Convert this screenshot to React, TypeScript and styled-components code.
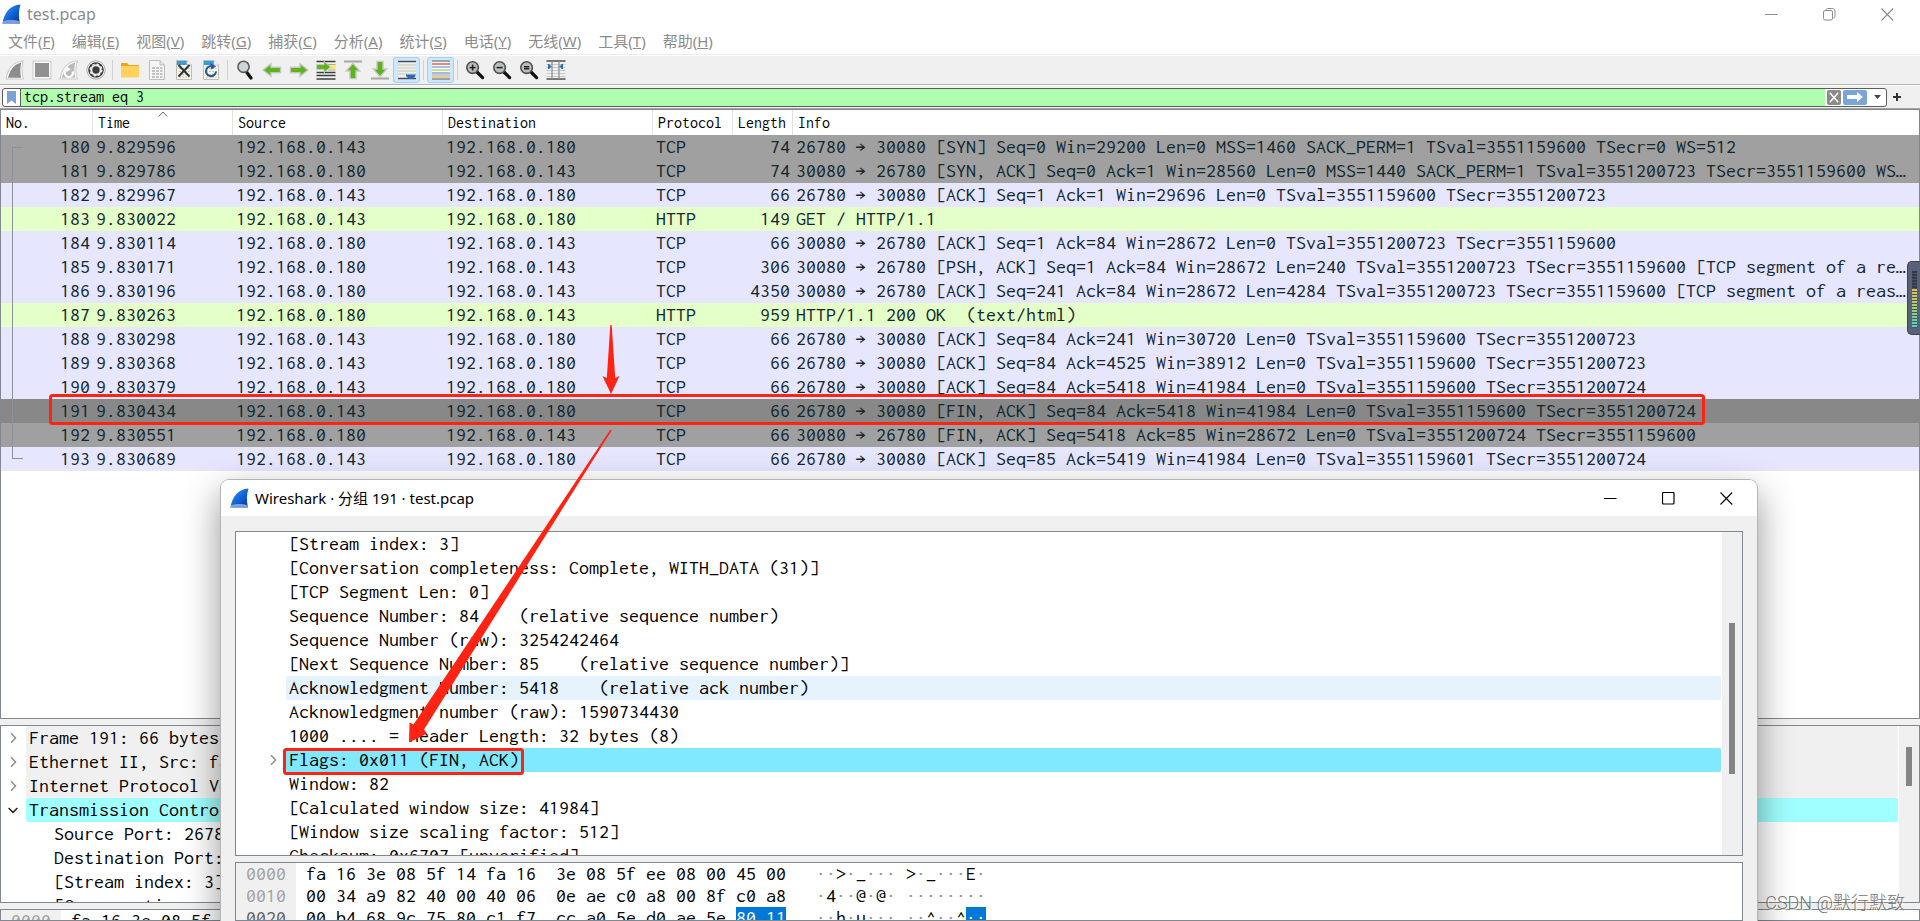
import React from 'react';
import styled, { createGlobalStyle, css } from 'styled-components';

const mono = `Inconsolata, 'Liberation Mono', 'Noto Sans CJK SC', monospace`;
const ui = `'Noto Sans', 'Noto Sans CJK SC', sans-serif`;
const frameLine = '#828790';
const red = '#ff2313';

const Global = createGlobalStyle`
  * { box-sizing: border-box; }
  html, body { margin: 0; padding: 0; }
  body { font-family: ${ui}; background: #f0f0f0; overflow: hidden; }
  button { border: 0; padding: 0; margin: 0; background: none; font: inherit; color: inherit; }
  svg { display: block; }
`;

/* ---------- main window ---------- */

const Desktop = styled.div`
  position: relative;
  display: flex;
  flex-direction: column;
  height: 100vh;
  overflow: hidden;
  background: #f0f0f0;
`;

const TitleBar = styled.header<{ $dialog?: boolean }>`
  display: flex;
  align-items: center;
  flex: none;
  height: ${p => (p.$dialog ? 36 : 28)}px;
  padding-left: ${p => (p.$dialog ? 9 : 2)}px;
  gap: 6px;
  background: #fff;
  color: ${p => (p.$dialog ? '#000' : '#8c8c8c')};
  font-size: 16px;
  line-height: 24px;
`;

const TitleText = styled.span<{ $small?: boolean }>`
  font-size: ${p => (p.$small ? 15 : 16)}px;
`;

const WindowButtons = styled.div<{ $dialog?: boolean }>`
  display: flex;
  align-self: stretch;
  margin-left: auto;
  padding-right: ${p => (p.$dialog ? 2 : 4)}px;
  color: ${p => (p.$dialog ? '#000' : '#8c8c8c')};
`;

const WindowButton = styled.button`
  display: flex;
  align-items: center;
  justify-content: center;
  width: 58px;
`;

const MenuBar = styled.nav`
  display: flex;
  gap: 1px;
  flex: none;
  height: 26px;
  background: #fff;
`;

const MenuItem = styled.button`
  padding: 0 8px;
  color: #8c8c8c;
  font-size: 15px;
  line-height: 26px;
  white-space: nowrap;
`;

const ToolBar = styled.div`
  display: flex;
  align-items: center;
  flex: none;
  height: 31px;
  padding-left: 1px;
  border-top: 1px solid #ececec;
  border-bottom: 1px solid #b4b4b6;
  background: #f0f0f0;
  box-shadow: inset 0 1px 0 #fff;
`;

const ToolButton = styled.button<{ $on?: boolean }>`
  display: flex;
  align-items: center;
  justify-content: center;
  width: 27px;
  height: 26px;
  ${p =>
    p.$on &&
    css`
      border: 1px solid #99d1ff;
      border-radius: 3px;
      background: #cce8ff;
    `}
`;

const ToolSeparator = styled.span`
  width: 1px;
  height: 20px;
  margin: 0 3px;
  background: #d0d0d0;
`;

const FilterBar = styled.div`
  display: flex;
  align-items: center;
  flex: none;
  height: 24px;
  padding-left: 2px;
  border-top: 1px solid #fff;
  border-bottom: 1px solid #a4a4a8;
`;

const FilterBox = styled.div`
  display: flex;
  flex: 1;
  align-items: center;
  height: 19px;
  border: 1px solid #5c5c5c;
  border-radius: 3px;
  overflow: hidden;
  background: #fff;
`;

const BookmarkButton = styled.button`
  display: flex;
  align-items: center;
  justify-content: center;
  width: 18px;
  height: 17px;
  border-right: 1px solid #5c5c5c;
`;

const FilterInput = styled.input`
  flex: 1;
  min-width: 0;
  height: 17px;
  padding: 0 3px 1px;
  border: 0;
  outline: 0;
  background: #afffaf;
  color: #000;
  font: 16px ${mono};
`;

const FilterAction = styled.button<{ $w: number; $bg?: string }>`
  display: flex;
  align-items: center;
  justify-content: center;
  width: ${p => p.$w}px;
  height: 15px;
  margin-left: 2px;
  border-radius: 2px;
  background: ${p => p.$bg || 'transparent'};
`;

const AddFilter = styled.button`
  display: flex;
  align-items: center;
  width: 33px;
  height: 19px;
  padding-left: 6px;
`;

const Pane = styled.section<{ $h?: number }>`
  display: flex;
  flex: ${p => (p.$h ? `0 0 ${p.$h}px` : '1 1 0')};
  min-height: 0;
  overflow: hidden;
  border: 1px solid ${frameLine};
  background: #fff;
`;

const Splitter = styled.div`
  flex: none;
  height: 6px;
  background: #f0f0f0;
`;

/* ---------- packet list ---------- */

const PacketTable = styled.table`
  width: 100%;
  height: max-content;
  table-layout: fixed;
  border-collapse: collapse;
  font-family: ${mono};
`;

const HeadCell = styled.th<{ $w?: number }>`
  position: relative;
  width: ${p => (p.$w ? `${p.$w}px` : 'auto')};
  height: 25px;
  padding: 0 0 0 5px;
  color: #000;
  font-size: 16px;
  font-weight: 400;
  line-height: 25px;
  text-align: left;
  box-shadow: ${p => (p.$w ? 'inset -1px 0 0 #e2e2e2' : 'none')};
`;

const SortMark = styled.svg`
  position: absolute;
  top: 1px;
  left: calc(50% - 5px);
`;

type Tone = 'gray' | 'tcp' | 'http' | 'selected';
const tones: Record<Tone, string> = {
  gray: '#a0a0a0',
  tcp: '#e7e6ff',
  http: '#e4ffc7',
  selected: '#888888',
};

const PacketRow = styled.tr<{ $tone: Tone }>`
  height: 24px;
  background: ${p => tones[p.$tone]};
  color: #12272e;
`;

const Cell = styled.td<{ $right?: boolean }>`
  position: relative;
  padding: ${p => (p.$right ? '0 3px 0 0' : '0 0 0 3px')};
  overflow: hidden;
  font-size: 20px;
  line-height: 24px;
  text-align: ${p => (p.$right ? 'right' : 'left')};
  text-overflow: ellipsis;
  white-space: pre;
`;

const StreamLine = styled.i<{ $edge?: 'start' | 'end' }>`
  position: absolute;
  left: 11px;
  width: 11px;
  top: ${p => (p.$edge === 'start' ? 12 : 0)}px;
  bottom: ${p => (p.$edge === 'end' ? 12 : 0)}px;
  border-left: 1px solid #8b9299;
  ${p => p.$edge === 'start' && 'border-top: 1px solid #8b9299;'}
  ${p => p.$edge === 'end' && 'border-bottom: 1px solid #8b9299;'}
`;

/* ---------- detail tree ---------- */

const Tree = styled.ul`
  flex: 1;
  min-width: 0;
  margin: 0;
  padding: 0;
  list-style: none;
  overflow: hidden;
  color: #000;
  font: 20px/24px ${mono};
`;

const TreeRow = styled.li`
  display: flex;
  height: 24px;
  padding-right: 1px;
`;

const TreeToggle = styled.span<{ $w: number }>`
  display: flex;
  align-items: center;
  justify-content: flex-end;
  flex: none;
  width: ${p => p.$w}px;
  padding-right: 8px;
`;

const TreeLabel = styled.span<{ $bg?: string }>`
  flex: 1;
  min-width: 0;
  padding-left: 3px;
  overflow: hidden;
  border-radius: 2px;
  background: ${p => p.$bg || 'transparent'};
  white-space: pre;
`;

const ScrollTrack = styled.div<{ $top: number }>`
  flex: none;
  width: 20px;
  padding: ${p => p.$top}px 0 0 7px;
  background: #f0f0f0;
`;

const ScrollThumb = styled.div<{ $h: number }>`
  width: 6px;
  height: ${p => p.$h}px;
  background: #858585;
`;

/* ---------- hex view ---------- */

const HexView = styled.div`
  flex: 1;
  overflow: hidden;
  font: 20px/22px ${mono};
  color: #000;
`;

const HexRow = styled.div`
  display: flex;
  height: 22px;
  white-space: pre;
`;

const HexOffset = styled.span<{ $strong?: boolean }>`
  width: 60px;
  padding-left: 10px;
  background: #f0f0f0;
  color: ${p => (p.$strong ? '#5e5e5e' : '#a0a0a0')};
`;

const HexBytes = styled.span`
  padding-left: 10px;
`;

const HexAscii = styled.span`
  padding-left: 30px;
`;

const Faint = styled.span`
  color: #909090;
`;

const Marked = styled.mark`
  display: inline-block;
  background: #0078d7;
  color: #fff;
`;

/* ---------- packet dialog ---------- */

const Dialog = styled.div`
  position: absolute;
  top: 479px;
  right: 162px;
  bottom: 0;
  left: 220px;
  display: flex;
  flex-direction: column;
  overflow: hidden;
  border: 1px solid #b4b4b4;
  border-bottom: 0;
  border-radius: 9px 9px 0 0;
  background: #f0f0f0;
`;

const DialogShadow = styled.div`
  position: absolute;
  top: 479px;
  right: 162px;
  bottom: -40px;
  left: 220px;
  border-radius: 9px;
  box-shadow: 0 14px 36px rgba(0, 0, 0, 0.42);
`;

const DialogBody = styled.div`
  display: flex;
  flex: 1;
  flex-direction: column;
  min-height: 0;
  padding: 15px 14px 0;
`;

/* ---------- things over the windows ---------- */

const Annotations = styled.svg`
  position: absolute;
  inset: 0;
  pointer-events: none;
`;

const Meter = styled.div`
  position: absolute;
  top: 261px;
  right: 0;
  width: 13px;
  height: 74px;
  padding: 9px 3px 8px 4px;
  border: 1px solid #3c4158;
  border-right: 0;
  border-radius: 5px 0 0 5px;
  background: #5a607a;
`;

const MeterBars = styled.div`
  width: 5px;
  height: 57px;
  background:
    repeating-linear-gradient(to bottom, transparent 0 2px, #4a5068 2px 3px),
    linear-gradient(to bottom, #34384c 0 17px, #e2c04a 18px, #a8cf68 34px, #56d6b0 54px);
`;

const Watermark = styled.div`
  position: absolute;
  right: 15px;
  bottom: 5px;
  color: rgba(90, 90, 90, 0.85);
  font: 300 18px/26px Roboto, 'Noto Sans CJK SC', sans-serif;
  text-shadow: 1px 1px 0 rgba(255, 255, 255, 0.7);
`;

/* ---------- drawings ---------- */

const Fin = ({ id }: { id: string }) => (
  <svg width="19" height="20" viewBox="0 0 19 20" aria-hidden="true">
    <defs>
      <linearGradient id={id} x1="0" y1="0" x2="1" y2="1">
        <stop offset="0" stopColor="#3f9bf5" />
        <stop offset="0.5" stopColor="#1166d8" />
        <stop offset="1" stopColor="#06329a" />
      </linearGradient>
    </defs>
    <path d="M0.5 19.5C2 9 8 1 18.5 0.5C16.5 6 16.5 13 18 19.5Z" fill={`url(#${id})`} />
    <path d="M0.5 19.5L1 17C6 15.5 13 15.5 17.6 17L18 19.5Z" fill="#7f9fd8" />
  </svg>
);

const WinIcon = ({ kind }: { kind: 'min' | 'max' | 'restore' | 'close' }) => (
  <svg width="13" height="13" viewBox="0 0 13 13" fill="none" stroke="currentColor" aria-hidden="true">
    {kind === 'min' && <path d="M0 6.5H12.5" />}
    {kind === 'max' && <rect x="0.5" y="0.5" width="11.5" height="11.5" rx="1" strokeWidth="1.2" />}
    {kind === 'restore' && (
      <>
        <rect x="0.5" y="2.5" width="9" height="9.5" rx="1.5" />
        <path d="M3 2.2C3 1 3.6 0.5 4.6 0.5H9.5C11 0.5 12 1.4 12 3V8.4C12 9.4 11.4 10 10.2 10" />
      </>
    )}
    {kind === 'close' && <path d="M0.5 0.5L12.2 12.5M12.2 0.5L0.5 12.5" strokeWidth="1.1" />}
  </svg>
);

const Lens = ({ sign }: { sign: 'plus' | 'minus' | 'equal' }) => (
  <>
    <path d="M12 12L17.6 17.6" stroke="#111" strokeWidth="3.2" strokeLinecap="round" />
    <circle cx="7.6" cy="7.6" r="5.8" fill="#b9bdbd" stroke="#4c4f50" strokeWidth="1.6" />
    {sign !== 'equal' && <path d="M4.6 7.6H10.6" stroke="#222" strokeWidth="1.5" />}
    {sign === 'plus' && <path d="M7.6 4.6V10.6" stroke="#222" strokeWidth="1.5" />}
    {sign === 'equal' && <path d="M5 6.8H10.2M5 8.8H10.2" stroke="#222" strokeWidth="1.4" />}
  </>
);

const Sheet = ({ top }: { top: string }) => (
  <>
    <path d="M2.5 0.5H13L17.5 5V19.5H2.5Z" fill="#f6f5e8" stroke="#bdbdb2" />
    <path d="M3 1H13V5H3Z" fill={top} />
    <path d="M13 0.5V5H17.5" fill="#fff" stroke="#bdbdb2" />
    <path d="M5 8.5H15.5M5 11.5H15.5M5 14.5H15.5M5 17H15.5" stroke="#c4c4bb" strokeDasharray="2 1" />
  </>
);

const glyphs: Record<string, React.ReactNode> = {
  start: (
    <>
      <path d="M1 19C2.5 9 8 1.5 18.5 0.8C16.5 6 16.5 13 18.5 19Z" fill="#fafafa" stroke="#c9c9c9" />
      <path d="M3 17.8C5 10 9 4.5 16.2 2.6C15 8 15 13 16.2 17.8Z" fill="#8d8d8d" />
    </>
  ),
  stop: (
    <>
      <rect x="1" y="1" width="18" height="18" fill="#fafafa" stroke="#c9c9c9" />
      <rect x="3" y="3" width="14" height="14" fill="#919191" />
    </>
  ),
  restart: (
    <>
      <path d="M1 19C2.5 9 8 1.5 18.5 0.8C16.5 6 16.5 13 18.5 19Z" fill="#fafafa" stroke="#c9c9c9" />
      <path d="M3 17.8C5 10 9 4.5 16.2 2.6C15 8 15 13 16.2 17.8Z" fill="#b9b9b9" />
      <path d="M8 9.5A4 4 0 1 0 13.5 11.5" fill="none" stroke="#fff" strokeWidth="2.2" />
      <path d="M7.5 6.5L12 9.2L7.6 12Z" fill="#fff" />
    </>
  ),
  options: (
    <>
      <circle cx="10" cy="10" r="9.2" fill="#fff" stroke="#a8a8a8" />
      <circle cx="10" cy="10" r="7.8" fill="#3c3c3c" />
      <circle cx="10" cy="10" r="4.7" fill="none" stroke="#efefef" strokeWidth="2" />
      <circle cx="10" cy="10" r="5.8" fill="none" stroke="#efefef" strokeWidth="1.4" strokeDasharray="2.3 2.25" />
      <circle cx="10" cy="10" r="2.6" fill="#3c3c3c" />
    </>
  ),
  open: (
    <>
      <path d="M1 4.2C1 3.5 1.4 3 2 3H7L9 5H18C18.6 5 19 5.4 19 6V8H1Z" fill="#eba817" />
      <rect x="1" y="6" width="18" height="11.5" rx="1" fill="#ffd25e" />
    </>
  ),
  save: (
    <>
      <path d="M2.5 0.5H13L17.5 5V19.5H2.5Z" fill="#f5f5f5" stroke="#bdbdbd" />
      <path d="M13 0.5V5H17.5" fill="#e0e0e0" stroke="#bdbdbd" />
      <path d="M5 8H15.5M5 11H15.5M5 14H15.5M5 17H15.5" stroke="#c4c4c4" strokeWidth="2" strokeDasharray="3 1" />
    </>
  ),
  close: (
    <>
      <Sheet top="#3b9ad8" />
      <path d="M4.5 5L15.5 16.5M15.5 5L4.5 16.5" stroke="#2f3338" strokeWidth="2" />
    </>
  ),
  reload: (
    <>
      <Sheet top="#3b9ad8" />
      <path d="M12.5 6.8A5 5 0 1 0 15 11.5" fill="none" stroke="#27579c" strokeWidth="2" />
      <path d="M9.5 3L15.2 6.4L10 9.6Z" fill="#27579c" />
    </>
  ),
  find: (
    <>
      <path d="M11.5 12L16 18" stroke="#111" strokeWidth="3.2" strokeLinecap="round" />
      <circle cx="8.5" cy="6.8" r="5.6" fill="#cfd4d6" stroke="#5a5d5f" strokeWidth="1.6" />
    </>
  ),
  back: <path d="M1 10L9 3.6V7.3H18.6V12.7H9V16.4Z" fill="#5db31f" stroke="#c6c9c0" strokeWidth="1.4" />,
  forward: <path d="M19 10L11 3.6V7.3H1.4V12.7H11V16.4Z" fill="#5db31f" stroke="#c6c9c0" strokeWidth="1.4" />,
  goto: (
    <>
      <path d="M0.5 1.5H19.5M0.5 12.5H19.5M0.5 15.5H19.5M0.5 19H19.5" stroke="#3c3f40" strokeWidth="1.4" />
      <path d="M12 4.5H19.5M12 10H19.5" stroke="#aaa" />
      <rect x="12" y="5.4" width="7.5" height="3.6" fill="#fce94f" />
      <path d="M14.5 7L8 1.4V4.6H0.7V9.4H8V12.6Z" fill="#5db31f" stroke="#c6c9c0" />
    </>
  ),
  top: (
    <>
      <path d="M1 1.5H19" stroke="#a7a9a5" strokeWidth="2" />
      <path d="M10 3.4L16.8 11H13V18.6H7V11H3.2Z" fill="#5db31f" stroke="#c6c9c0" strokeWidth="1.4" />
    </>
  ),
  bottom: (
    <>
      <path d="M1 18.5H19" stroke="#a7a9a5" strokeWidth="2" />
      <path d="M10 16.6L16.8 9H13V1.4H7V9H3.2Z" fill="#5db31f" stroke="#c6c9c0" strokeWidth="1.4" />
    </>
  ),
  follow: (
    <>
      <rect x="1" y="1" width="18" height="18" fill="#eeeeea" />
      <path d="M1 1.5H19M1 18.5H19" stroke="#4b4e50" strokeWidth="1.4" />
      <path d="M1 5H19M1 8H19M1 11H19M1 14H19" stroke="#c6c6bf" />
      <path d="M9 14.5H18.5V16L15.5 19H12L9 16Z" fill="#2f66b0" />
    </>
  ),
  colorize: (
    <>
      <rect x="1" y="0.5" width="18" height="19" fill="#fff" />
      <path d="M1 1H19M1 19H19" stroke="#4b4e50" strokeWidth="1.2" />
      <path d="M1 4H19" stroke="#ef4949" strokeWidth="1.4" />
      <path d="M1 7H19" stroke="#6f94cc" strokeWidth="1.2" />
      <path d="M1 10H19" stroke="#8ad84a" strokeWidth="1.2" />
      <path d="M1 13H19" stroke="#6f8fc0" strokeWidth="1.2" />
      <path d="M1 15H19" stroke="#a08ab5" strokeWidth="1" />
      <path d="M1 17H19" stroke="#d0b040" strokeWidth="1.2" />
    </>
  ),
  zoomIn: <Lens sign="plus" />,
  zoomOut: <Lens sign="minus" />,
  zoomNormal: <Lens sign="equal" />,
  columns: (
    <>
      <path d="M0.5 1H19.5M0.5 19H19.5" stroke="#4b4e50" strokeWidth="1.4" />
      <path d="M0.5 4.5H19.5M0.5 7.5H19.5M0.5 10.5H19.5M0.5 13.5H19.5M0.5 16.5H19.5" stroke="#c9c9c2" />
      <path d="M6 1V19M13 1V19" stroke="#8b8d8b" strokeWidth="1.2" />
      <path d="M2.5 4V9L5 6.5ZM16.5 4V9L14 6.5Z" fill="#2f66b0" stroke="#2f66b0" />
    </>
  ),
};

const Chevron = ({ open }: { open?: boolean }) => (
  <svg width="10" height="12" viewBox="0 0 10 12" fill="none" aria-hidden="true">
    {open ? (
      <path d="M0.6 4L5 8.4L9.4 4" stroke="#222" strokeWidth="1.5" />
    ) : (
      <path d="M3 1.2L7.6 6L3 10.8" stroke="#8a8a8a" strokeWidth="1.4" />
    )}
  </svg>
);

/* ---------- data ---------- */

const menus: [string, string][] = [
  ['文件', 'F'], ['编辑', 'E'], ['视图', 'V'], ['跳转', 'G'], ['捕获', 'C'], ['分析', 'A'],
  ['统计', 'S'], ['电话', 'Y'], ['无线', 'W'], ['工具', 'T'], ['帮助', 'H'],
];

const tools = [
  'start', 'stop', 'restart', 'options', '|', 'open', 'save', 'close', 'reload', '|',
  'find', 'back', 'forward', 'goto', 'top', 'bottom', 'follow', '|', 'colorize', '|',
  'zoomIn', 'zoomOut', 'zoomNormal', 'columns',
];

const columns: [string, number | undefined][] = [
  ['No.', 92], ['Time', 140], ['Source', 210], ['Destination', 210], ['Protocol', 80], ['Length', 60], ['Info', undefined],
];

const C = '192.168.0.143';
const S = '192.168.0.180';
const packets: [number, string, string, string, string, number, string, Tone][] = [
  [180, '9.829596', C, S, 'TCP', 74, '26780 → 30080 [SYN] Seq=0 Win=29200 Len=0 MSS=1460 SACK_PERM=1 TSval=3551159600 TSecr=0 WS=512', 'gray'],
  [181, '9.829786', S, C, 'TCP', 74, '30080 → 26780 [SYN, ACK] Seq=0 Ack=1 Win=28560 Len=0 MSS=1440 SACK_PERM=1 TSval=3551200723 TSecr=3551159600 WS…', 'gray'],
  [182, '9.829967', C, S, 'TCP', 66, '26780 → 30080 [ACK] Seq=1 Ack=1 Win=29696 Len=0 TSval=3551159600 TSecr=3551200723', 'tcp'],
  [183, '9.830022', C, S, 'HTTP', 149, 'GET / HTTP/1.1', 'http'],
  [184, '9.830114', S, C, 'TCP', 66, '30080 → 26780 [ACK] Seq=1 Ack=84 Win=28672 Len=0 TSval=3551200723 TSecr=3551159600', 'tcp'],
  [185, '9.830171', S, C, 'TCP', 306, '30080 → 26780 [PSH, ACK] Seq=1 Ack=84 Win=28672 Len=240 TSval=3551200723 TSecr=3551159600 [TCP segment of a re…', 'tcp'],
  [186, '9.830196', S, C, 'TCP', 4350, '30080 → 26780 [ACK] Seq=241 Ack=84 Win=28672 Len=4284 TSval=3551200723 TSecr=3551159600 [TCP segment of a reas…', 'tcp'],
  [187, '9.830263', S, C, 'HTTP', 959, 'HTTP/1.1 200 OK  (text/html)', 'http'],
  [188, '9.830298', C, S, 'TCP', 66, '26780 → 30080 [ACK] Seq=84 Ack=241 Win=30720 Len=0 TSval=3551159600 TSecr=3551200723', 'tcp'],
  [189, '9.830368', C, S, 'TCP', 66, '26780 → 30080 [ACK] Seq=84 Ack=4525 Win=38912 Len=0 TSval=3551159600 TSecr=3551200723', 'tcp'],
  [190, '9.830379', C, S, 'TCP', 66, '26780 → 30080 [ACK] Seq=84 Ack=5418 Win=41984 Len=0 TSval=3551159600 TSecr=3551200724', 'tcp'],
  [191, '9.830434', C, S, 'TCP', 66, '26780 → 30080 [FIN, ACK] Seq=84 Ack=5418 Win=41984 Len=0 TSval=3551159600 TSecr=3551200724', 'selected'],
  [192, '9.830551', S, C, 'TCP', 66, '30080 → 26780 [FIN, ACK] Seq=5418 Ack=85 Win=28672 Len=0 TSval=3551200724 TSecr=3551159600', 'gray'],
  [193, '9.830689', C, S, 'TCP', 66, '26780 → 30080 [ACK] Seq=85 Ack=5419 Win=41984 Len=0 TSval=3551159601 TSecr=3551200724', 'tcp'],
];

type Node = { text: string; toggle?: 'open' | 'closed'; bg?: string; child?: boolean };

const mainTree: Node[] = [
  { text: 'Frame 191: 66 bytes', toggle: 'closed', bg: '#f0f0f0' },
  { text: 'Ethernet II, Src: fa', toggle: 'closed', bg: '#f0f0f0' },
  { text: 'Internet Protocol Ve', toggle: 'closed', bg: '#f0f0f0' },
  { text: 'Transmission Control', toggle: 'open', bg: '#a0ffff' },
  { text: 'Source Port: 26780', child: true },
  { text: 'Destination Port:', child: true },
  { text: '[Stream index: 3]', child: true },
  { text: '[Conversation', child: true },
];

const dialogTree: Node[] = [
  { text: '[Stream index: 3]' },
  { text: '[Conversation completeness: Complete, WITH_DATA (31)]' },
  { text: '[TCP Segment Len: 0]' },
  { text: 'Sequence Number: 84    (relative sequence number)' },
  { text: 'Sequence Number (raw): 3254242464' },
  { text: '[Next Sequence Number: 85    (relative sequence number)]' },
  { text: 'Acknowledgment Number: 5418    (relative ack number)', bg: '#e5f3ff' },
  { text: 'Acknowledgment number (raw): 1590734430' },
  { text: '1000 .... = Header Length: 32 bytes (8)' },
  { text: 'Flags: 0x011 (FIN, ACK)', toggle: 'closed', bg: '#80e8ff' },
  { text: 'Window: 82' },
  { text: '[Calculated window size: 41984]' },
  { text: '[Window size scaling factor: 512]' },
  { text: 'Checksum: 0x6707 [unverified]' },
];

const Ascii = ({ text }: { text: string }) => (
  <>
    {text.split(/(·+)/).map((part, i) => (part.startsWith('·') ? <Faint key={i}>{part}</Faint> : part))}
  </>
);

const TreeList = ({ nodes, indent, childIndent }: { nodes: Node[]; indent: number; childIndent?: number }) => (
  <Tree>
    {nodes.map(n => (
      <TreeRow key={n.text}>
        <TreeToggle $w={n.child && childIndent ? childIndent : indent}>
          {n.toggle && <Chevron open={n.toggle === 'open'} />}
        </TreeToggle>
        <TreeLabel $bg={n.bg}>{n.text}</TreeLabel>
      </TreeRow>
    ))}
  </Tree>
);

export default function App() {
  return (
    <Desktop>
      <Global />
      <TitleBar>
        <Fin id="finMain" />
        <TitleText>test.pcap</TitleText>
        <WindowButtons>
          <WindowButton aria-label="最小化"><WinIcon kind="min" /></WindowButton>
          <WindowButton aria-label="还原"><WinIcon kind="restore" /></WindowButton>
          <WindowButton aria-label="关闭"><WinIcon kind="close" /></WindowButton>
        </WindowButtons>
      </TitleBar>

      <MenuBar>
        {menus.map(([name, key]) => (
          <MenuItem key={key}>{name}(<u>{key}</u>)</MenuItem>
        ))}
      </MenuBar>

      <ToolBar>
        {tools.map((t, i) =>
          t === '|' ? (
            <ToolSeparator key={i} />
          ) : (
            <ToolButton key={i} $on={t === 'follow' || t === 'colorize'} aria-label={t}>
              <svg width="20" height="20" viewBox="0 0 20 20" aria-hidden="true">{glyphs[t]}</svg>
            </ToolButton>
          ),
        )}
      </ToolBar>

      <FilterBar>
        <FilterBox>
          <BookmarkButton aria-label="bookmark">
            <svg width="9" height="13" viewBox="0 0 9 13" aria-hidden="true">
              <path d="M0 0H9V13L4.5 9.5L0 13Z" fill="#7aa2d6" />
            </svg>
          </BookmarkButton>
          <FilterInput aria-label="display filter" defaultValue="tcp.stream eq 3" spellCheck={false} />
          <FilterAction $w={14} $bg="#8a8a86" aria-label="clear">
            <svg width="10" height="11" viewBox="0 0 10 11" aria-hidden="true">
              <path d="M0.8 0.8L9.2 10.2M9.2 0.8L0.8 10.2" stroke="#fff" strokeWidth="1.5" />
            </svg>
          </FilterAction>
          <FilterAction $w={24} $bg="#7ba4d8" aria-label="apply">
            <svg width="16" height="10" viewBox="0 0 16 10" aria-hidden="true">
              <path d="M0 3H10V0L16 5L10 10V7H0Z" fill="#fff" />
            </svg>
          </FilterAction>
          <FilterAction $w={17} aria-label="history">
            <svg width="7" height="4" viewBox="0 0 7 4" aria-hidden="true">
              <path d="M0 0H7L3.5 4Z" fill="#444" />
            </svg>
          </FilterAction>
        </FilterBox>
        <AddFilter aria-label="add">
          <svg width="8" height="8" viewBox="0 0 8 8" aria-hidden="true">
            <path d="M0 4H8M4 0V8" stroke="#333" strokeWidth="2" />
          </svg>
        </AddFilter>
      </FilterBar>

      <Pane>
        <PacketTable>
          <thead>
            <tr>
              {columns.map(([name, w]) => (
                <HeadCell key={name} $w={w}>
                  {name}
                  {name === 'Time' && (
                    <SortMark width="10" height="6" viewBox="0 0 10 6">
                      <path d="M0.8 5.4L5 1L9.2 5.4" fill="none" stroke="#666" />
                    </SortMark>
                  )}
                </HeadCell>
              ))}
            </tr>
          </thead>
          <tbody>
            {packets.map(([no, time, src, dst, proto, len, info, tone], i) => (
              <PacketRow key={no} $tone={tone}>
                <Cell $right>
                  <StreamLine $edge={i === 0 ? 'start' : i === packets.length - 1 ? 'end' : undefined} />
                  {no}
                </Cell>
                <Cell>{time}</Cell>
                <Cell>{src}</Cell>
                <Cell>{dst}</Cell>
                <Cell>{proto}</Cell>
                <Cell $right>{len}</Cell>
                <Cell>{info}</Cell>
              </PacketRow>
            ))}
          </tbody>
        </PacketTable>
      </Pane>
      <Splitter />
      <Pane $h={178}>
        <TreeList nodes={mainTree} indent={25} childIndent={50} />
        <ScrollTrack $top={21}><ScrollThumb $h={39} /></ScrollTrack>
      </Pane>
      <Splitter />
      <Pane $h={12}>
        <HexView>
          <HexRow>
            <HexOffset>0000</HexOffset>
            <HexBytes>fa 16 3e 08 5f</HexBytes>
          </HexRow>
        </HexView>
      </Pane>

      <DialogShadow />
      <Dialog role="dialog" aria-label="Wireshark">
        <TitleBar $dialog>
          <Fin id="finDialog" />
          <TitleText $small>Wireshark · 分组 191 · test.pcap</TitleText>
          <WindowButtons $dialog>
            <WindowButton aria-label="最小化"><WinIcon kind="min" /></WindowButton>
            <WindowButton aria-label="最大化"><WinIcon kind="max" /></WindowButton>
            <WindowButton aria-label="关闭"><WinIcon kind="close" /></WindowButton>
          </WindowButtons>
        </TitleBar>
        <DialogBody>
          <Pane $h={325}>
            <TreeList nodes={dialogTree} indent={50} />
            <ScrollTrack $top={91}><ScrollThumb $h={151} /></ScrollTrack>
          </Pane>
          <Splitter />
          <Pane>
            <HexView>
              <HexRow>
                <HexOffset>0000</HexOffset>
                <HexBytes>fa 16 3e 08 5f 14 fa 16  3e 08 5f ee 08 00 45 00</HexBytes>
                <HexAscii><Ascii text="··>·_··· >·_···E·" /></HexAscii>
              </HexRow>
              <HexRow>
                <HexOffset>0010</HexOffset>
                <HexBytes>00 34 a9 82 40 00 40 06  0e ae c0 a8 00 8f c0 a8</HexBytes>
                <HexAscii><Ascii text="·4··@·@· ········" /></HexAscii>
              </HexRow>
              <HexRow>
                <HexOffset $strong>0020</HexOffset>
                <HexBytes>00 b4 68 9c 75 80 c1 f7  cc a0 5e d0 ae 5e <Marked>80 11</Marked></HexBytes>
                <HexAscii><Ascii text="··h·u··· ··^··^" /><Marked>··</Marked></HexAscii>
              </HexRow>
            </HexView>
          </Pane>
        </DialogBody>
      </Dialog>

      <Meter><MeterBars /></Meter>
      <Annotations width="100%" height="100%" aria-hidden="true">
        <g fill="none" stroke={red} strokeWidth="3">
          <rect x="50.5" y="395.5" width="1653" height="28" rx="2" />
          <rect x="284.5" y="749.5" width="238" height="24" rx="2" />
        </g>
        <g fill={red}>
          <path d="M610.3 325H611.7L615.2 378L619.5 376L611 394L602.5 376L606.8 378Z" />
          <path d="M610.4 429.6L611.6 430.4L424 729.5L427 733.5L409 742.5L409.5 722.5L413.5 724.5Z" />
        </g>
      </Annotations>
      <Watermark>CSDN @默行默致</Watermark>
    </Desktop>
  );
}
